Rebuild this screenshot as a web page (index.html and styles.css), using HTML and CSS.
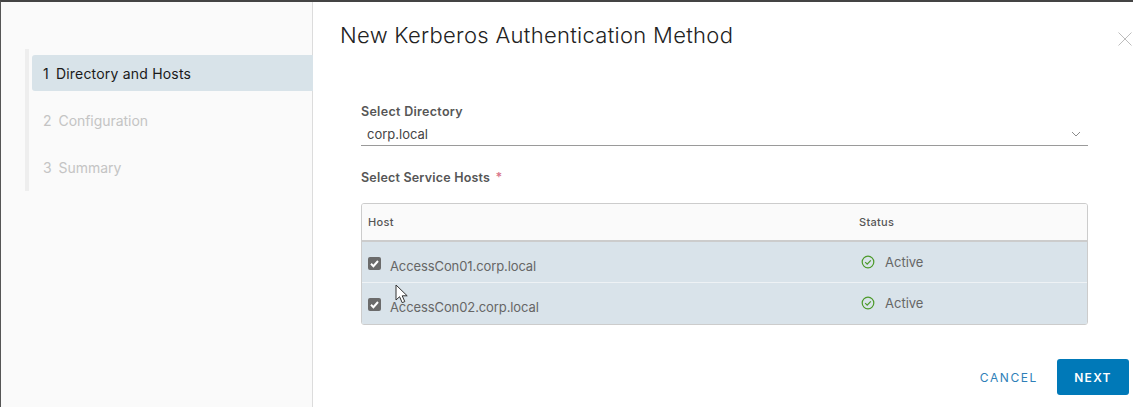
FILE: index.html
```html
<!DOCTYPE html>
<html lang="en">
<head>
<meta charset="utf-8">
<title>New Kerberos Authentication Method</title>
<link rel="stylesheet" href="styles.css">
</head>
<body>
<div class="modal">
  <aside class="side">
    <ol class="steps">
      <li class="step active"><span>1</span><span>Directory and Hosts</span></li>
      <li class="step"><span>2</span><span>Configuration</span></li>
      <li class="step"><span>3</span><span>Summary</span></li>
    </ol>
  </aside>
  <main class="content">
    <header class="head">
      <h1>New Kerberos Authentication Method</h1>
      <svg class="close" width="14" height="14" viewBox="0 0 14 14"><path d="M.5.5l13 13M13.5.5l-13 13" fill="none" stroke="#bdbdbd" stroke-width="1"/></svg>
    </header>
    <form class="form">
      <label class="lbl">Select Directory</label>
      <div class="select">
        <span>corp.local</span>
        <svg width="10" height="6" viewBox="0 0 10 6"><path d="M1 1l4 4 4-4" fill="none" stroke="#8c8c8c" stroke-width="1"/></svg>
      </div>
      <div class="lbl hosts">Select Service Hosts <span class="req">*</span></div>
      <div class="grid">
        <div class="row hdr"><div class="c1">Host</div><div class="c2">Status</div></div>
        <div class="row sel">
          <div class="c1"><span class="cb"><svg width="13" height="13" viewBox="0 0 13 13"><path d="M3 6.8l2.4 2.4L10 4" fill="none" stroke="#fff" stroke-width="2"/></svg></span><span class="host">AccessCon01.corp.local</span></div>
          <div class="c2"><svg width="14" height="14" viewBox="0 0 14 14"><circle cx="7" cy="7" r="5.8" fill="none" stroke="#4c9a2a" stroke-width="1.2"/><path d="M4.2 7.1l2 2 3.6-3.8" fill="none" stroke="#4c9a2a" stroke-width="1.2"/></svg><span>Active</span></div>
        </div>
        <div class="row sel">
          <div class="c1"><span class="cb"><svg width="13" height="13" viewBox="0 0 13 13"><path d="M3 6.8l2.4 2.4L10 4" fill="none" stroke="#fff" stroke-width="2"/></svg></span><span class="host">AccessCon02.corp.local</span></div>
          <div class="c2"><svg width="14" height="14" viewBox="0 0 14 14"><circle cx="7" cy="7" r="5.8" fill="none" stroke="#4c9a2a" stroke-width="1.2"/><path d="M4.2 7.1l2 2 3.6-3.8" fill="none" stroke="#4c9a2a" stroke-width="1.2"/></svg><span>Active</span></div>
        </div>
      </div>
    </form>
    <footer class="foot">
      <button type="button" class="btn cancel">CANCEL</button>
      <button type="button" class="btn next">NEXT</button>
    </footer>
  </main>
</div>
<svg class="cursor" width="16" height="23" viewBox="0 0 16 23"><path d="M1 1v15l3.6-3.3 2.6 6 2.6-1.1-2.6-5.8h5z" fill="#fff" stroke="#333" stroke-width="1"/></svg>
</body>
</html>
```
FILE: styles.css
```css
* { box-sizing: border-box; }
html, body { margin: 0; height: 100%; overflow: hidden; }
body { background: #fff; font-family: "Inter", "Liberation Sans", sans-serif; color: #565656; }
.modal { display: flex; height: 407px; border-top: 2px solid #444; border-left: 1px solid #555; }
.side { width: 312px; flex: none; background: #fafafa; border-right: 1px solid #dcdcdc; padding: 47px 0 0 24px; }
.steps { list-style: none; margin: 0; padding: 6px 0; height: 142px; border-left: 4px solid #eeeeee; }
.step { display: flex; gap: 7px; height: 36px; margin: 0 0 11px 3px; padding-left: 11px; align-items: center; font-size: 14px; letter-spacing: -.05px; color: #c4c4c4; border-radius: 3px 0 0 3px; }
.step.active { background: #d8e3e9; color: #1a1a1a; margin-right: -1px; letter-spacing: .2px; }
.content { flex: 1; display: flex; flex-direction: column; padding-left: 27px; min-width: 0; }
.head { display: flex; justify-content: space-between; padding-top: 19px; height: 78px; }
h1 { margin: 0; font-size: 22px; line-height: 28px; font-weight: 300; color: #222; letter-spacing: .3px; }
.close { margin: 11px 1px 0 0; }
.form { padding-left: 21px; width: 748px; }
.lbl { display: block; font-size: 12.5px; font-weight: 600; line-height: 16px; color: #565656; padding-top: 24px; letter-spacing: .3px; }
.select { display: flex; justify-content: space-between; align-items: center; height: 26px; padding: 3px 7px 0 6px; border-bottom: 1px solid #9a9a9a; font-size: 13px; color: #444; }
.hosts { padding-top: 24px; margin-bottom: 17px; letter-spacing: .2px; }
.req { color: #d9748a; margin-left: 2px; }
.grid { border: 1px solid #ccc; border-radius: 3px; overflow: hidden; }
.row { display: flex; }
.hdr { height: 38px; background: #fafafa; border-bottom: 2px solid #ccc; align-items: center; font-size: 11px; font-weight: 500; letter-spacing: .3px; }
.sel { height: 41px; background: #d9e3ea; border-bottom: 1px solid #eef2f5; font-size: 13px; color: #666; }
.sel:last-child { border-bottom-color: #d9e3ea; }
.c1 { width: 491px; padding-left: 6px; display: flex; align-items: center; }
.sel .c1 { padding-top: 2px; }
.c2 { display: flex; align-items: center; gap: 10px; }
.hdr .c2 { padding-left: 6px; }
.sel .c2 { padding: 0 0 1px 8px; }
.cb { width: 13px; height: 13px; border-radius: 2px; background: #6b6b6b; margin-right: 9px; display: flex; }
.host { padding-top: 5px; letter-spacing: -.1px; }
.foot { display: flex; justify-content: flex-end; align-items: center; gap: 13px; padding: 34px 4px 0 0; }
.btn { font: 600 12px "Inter", "Liberation Sans", sans-serif; letter-spacing: 1.3px; border: 0; border-radius: 3px; background: none; height: 36px; }
.cancel { color: #2f7fb8; font-weight: 400; letter-spacing: 1.6px; }
.next { background: #0079b8; color: #fff; width: 72px; }
.cursor { position: absolute; left: 395px; top: 284px; }
```
